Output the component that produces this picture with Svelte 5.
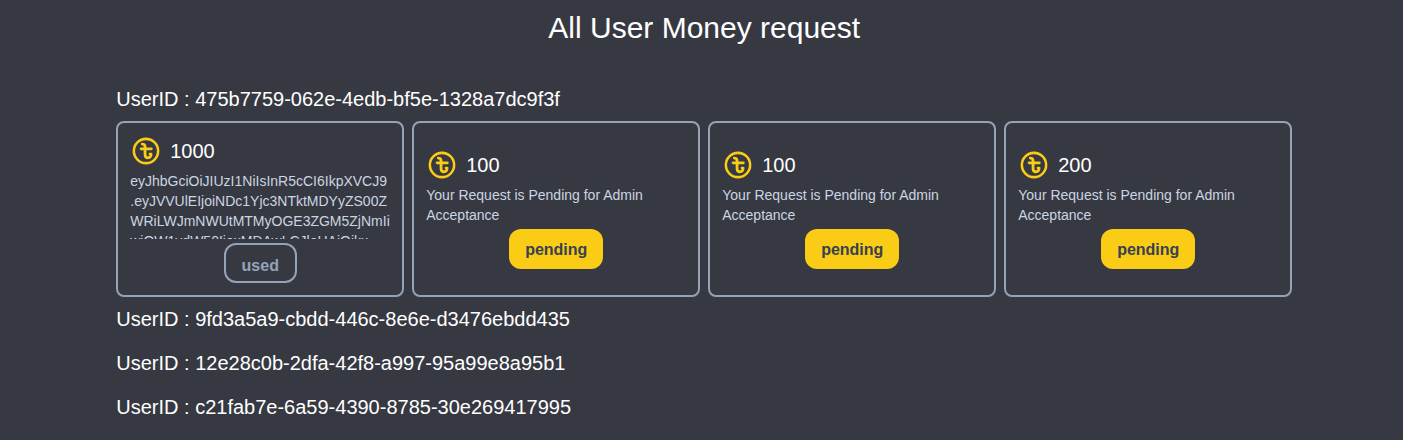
<script>
  const token = [
    'eyJhbGciOiJIUzI1NiIsInR5cCI6IkpXVCJ9',
    '.eyJVVUlEIjoiNDc1Yjc3NTktMDYyZS00Z',
    'WRiLWJmNWUtMTMyOGE3ZGM5ZjNmIi',
    'wiQW1vdW50IjoxMDAwLCJleHAiOjkx'
  ].join('\n');
  const waiting = 'Your Request is Pending for Admin Acceptance';
  const users = [
    {
      id: '475b7759-062e-4edb-bf5e-1328a7dc9f3f',
      requests: [
        { amount: 1000, text: token, status: 'used' },
        { amount: 100, text: waiting, status: 'pending' },
        { amount: 100, text: waiting, status: 'pending' },
        { amount: 200, text: waiting, status: 'pending' }
      ]
    },
    { id: '9fd3a5a9-cbdd-446c-8e6e-d3476ebdd435', requests: [] },
    { id: '12e28c0b-2dfa-42f8-a997-95a99e8a95b1', requests: [] },
    { id: 'c21fab7e-6a59-4390-8785-30e269417995', requests: [] }
  ];
</script>

<main>
  <h1>All User Money request</h1>
  {#each users as user}
    <section>
      <h2>UserID : {user.id}</h2>
      {#if user.requests.length}
        <div class="cards">
          {#each user.requests as request}
            <article>
              <div class="amount">
                <svg viewBox="0 0 24 24" aria-hidden="true">
                  <circle cx="12" cy="12" r="9.1" />
                  <path class="sign" d="M9.2 6.8c1.5 0 2.1.8 2.1 2.1v5.7c0 1.6.8 2.5 2.2 2.5 1.500 0 2.300-1 2.300-2.800h-.8M8.300 10.400h7.700" />
                </svg>
                <span>{request.amount}</span>
              </div>
              <p>{request.text}</p>
              <button class={request.status}>{request.status}</button>
            </article>
          {/each}
        </div>
      {/if}
    </section>
  {/each}
</main>

<style>
  :global(body) {
    background: #373942;
    overflow: hidden;
  }
  main {
    width: 1176px;
    height: 430px;
    margin: 0 0 0 116.25px;
    padding-top: 10px;
    color: #fff;
    font-family: "Liberation Sans", Arial, sans-serif;
  }
  h1 {
    margin: 0 0 31px;
    font-size: 30px;
    line-height: 36px;
    font-weight: 400;
    text-align: center;
  }
  h2 {
    margin: 0;
    padding: 8px 0;
    font-size: 20px;
    line-height: 28px;
    font-weight: 400;
  }
  .cards {
    display: grid;
    grid-template-columns: repeat(4, 288px);
    gap: 8px;
  }
  article {
    box-sizing: border-box;
    height: 176px;
    padding: 12px;
    border: 2px solid #94a3b8;
    border-radius: 8px;
    display: flex;
    flex-direction: column;
    justify-content: center;
    gap: 4px;
  }
  .amount {
    display: flex;
    align-items: center;
    gap: 8px;
    font-size: 20px;
    line-height: 28px;
  }
  svg {
    width: 32px;
    height: 32px;
    fill: none;
    stroke: #facc15;
    stroke-width: 1.9;
    stroke-linecap: round;
    stroke-linejoin: round;
  }
  .sign {
    stroke-width: 2.1;
  }
  p {
    margin: 0;
    max-height: 68px;
    overflow: hidden;
    color: #cbd5e1;
    font-size: 14px;
    line-height: 20px;
    white-space: pre-line;
  }
  button {
    box-sizing: border-box;
    flex: none;
    align-self: center;
    height: 40px;
    padding: 2px 16px 0;
    border: 0;
    border-radius: 12px;
    font: 700 16px/24px "Liberation Sans", Arial, sans-serif;
  }
  .pending {
    background: #facc15;
    color: #374151;
  }
  .used {
    padding: 5px 15.7px 0;
    border: 2px solid #94a3b8;
    background: transparent;
    color: #94a3b8;
  }
</style>
